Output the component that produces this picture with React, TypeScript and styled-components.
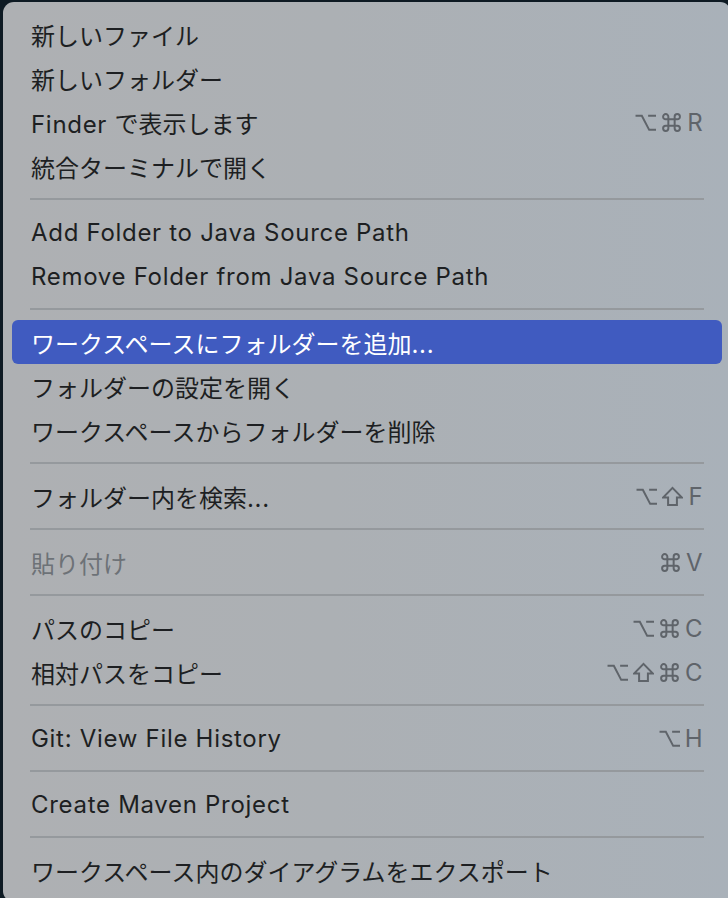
import React from "react";
import styled, { createGlobalStyle } from "styled-components";

const GlobalStyle = createGlobalStyle`
  html, body {
    margin: 0;
    padding: 0;
    background: #0e1a23;
    overflow: hidden;
  }
  body {
    font-family: "Inter", "Noto Sans CJK JP", sans-serif;
  }
`;

const Panel = styled.div`
  box-sizing: border-box;
  margin: 2px 0 0 3px;
  width: 728px;
  height: 900px;
  border-radius: 11px;
  padding: 10px 9px 8px;
  background: linear-gradient(90deg, #aeb0b3 0%, #acb0b4 45%, #a9b1b9 100%);
  display: flex;
  flex-direction: column;
`;

const Item = styled.div<{ $active?: boolean; $disabled?: boolean }>`
  box-sizing: border-box;
  height: 44px;
  flex: none;
  display: flex;
  align-items: center;
  justify-content: space-between;
  padding: 0 19px;
  border-radius: 6px;
  font-family: "Inter", "Noto Sans CJK JP", sans-serif;
  font-size: 24px;
  color: ${(p) => (p.$active ? "#ffffff" : p.$disabled ? "#6d7277" : "#1d1f22")};
  background: ${(p) => (p.$active ? "#405bc0" : "transparent")};
`;

const Label = styled.span`
  white-space: nowrap;
`;

const Latin = styled.span`
  letter-spacing: 0.7px;
`;

const Shortcut = styled.span`
  display: flex;
  align-items: center;
  gap: 5px;
  color: #5f646a;
  font-family: "Inter", sans-serif;
  font-size: 24px;
  letter-spacing: 0.4px;
`;

const KeyIcon = styled.svg`
  width: 21px;
  height: 21px;
  flex: none;
  fill: none;
  stroke: currentColor;
  stroke-width: 1.9;
  stroke-linejoin: miter;
`;

const Separator = styled.div`
  height: 22px;
  flex: none;
  display: flex;
  align-items: center;
  padding: 0 18px;
`;

const Rule = styled.div`
  flex: 1;
  height: 2px;
  background: #95999d;
`;

const icons: Record<string, string> = {
  "⌥": "M0.5 3.5 H6.5 L13.5 17 H20 M12.5 3.5 H20",
  "⇧": "M10 1.8 L19 11 H14.2 V18.2 H5.8 V11 H1 Z",
  "⌘":
    "M7 7 V4.5 A2.5 2.5 0 1 0 4.5 7 H15.5 A2.5 2.5 0 1 0 13 4.5 V15.5 A2.5 2.5 0 1 0 15.5 13 H4.5 A2.5 2.5 0 1 0 7 15.5 Z",
};

function Key({ k }: { k: string }) {
  const d = icons[k];
  if (!d) return <span>{k}</span>;
  return (
    <KeyIcon viewBox="0 0 20 20" aria-label={k}>
      <path d={d} />
    </KeyIcon>
  );
}

function Text({ s }: { s: string }) {
  const parts = s.split(/([\u3000-\u9fff\uff00-\uffef]+)/).filter(Boolean);
  return (
    <>
      {parts.map((p, i) =>
        /[\u3000-\u9fff\uff00-\uffef]/.test(p) ? (
          <span key={i}>{p}</span>
        ) : (
          <Latin key={i}>{p}</Latin>
        )
      )}
    </>
  );
}

type Row =
  | { sep: true }
  | { label: string; keys?: string[]; active?: boolean; disabled?: boolean };

const rows: Row[] = [
  { label: "新しいファイル" },
  { label: "新しいフォルダー" },
  { label: "Finder で表示します", keys: ["⌥", "⌘", "R"] },
  { label: "統合ターミナルで開く" },
  { sep: true },
  { label: "Add Folder to Java Source Path" },
  { label: "Remove Folder from Java Source Path" },
  { sep: true },
  { label: "ワークスペースにフォルダーを追加...", active: true },
  { label: "フォルダーの設定を開く" },
  { label: "ワークスペースからフォルダーを削除" },
  { sep: true },
  { label: "フォルダー内を検索...", keys: ["⌥", "⇧", "F"] },
  { sep: true },
  { label: "貼り付け", keys: ["⌘", "V"], disabled: true },
  { sep: true },
  { label: "パスのコピー", keys: ["⌥", "⌘", "C"] },
  { label: "相対パスをコピー", keys: ["⌥", "⇧", "⌘", "C"] },
  { sep: true },
  { label: "Git: View File History", keys: ["⌥", "H"] },
  { sep: true },
  { label: "Create Maven Project" },
  { sep: true },
  { label: "ワークスペース内のダイアグラムをエクスポート" },
];

export default function App() {
  return (
    <>
      <GlobalStyle />
      <Panel>
        {rows.map((r, i) =>
          "sep" in r ? (
            <Separator key={i}>
              <Rule />
            </Separator>
          ) : (
            <Item key={i} $active={r.active} $disabled={r.disabled}>
              <Label>
                <Text s={r.label} />
              </Label>
              {r.keys && (
                <Shortcut>
                  {r.keys.map((k, j) => (
                    <Key key={j} k={k} />
                  ))}
                </Shortcut>
              )}
            </Item>
          )
        )}
      </Panel>
    </>
  );
}
